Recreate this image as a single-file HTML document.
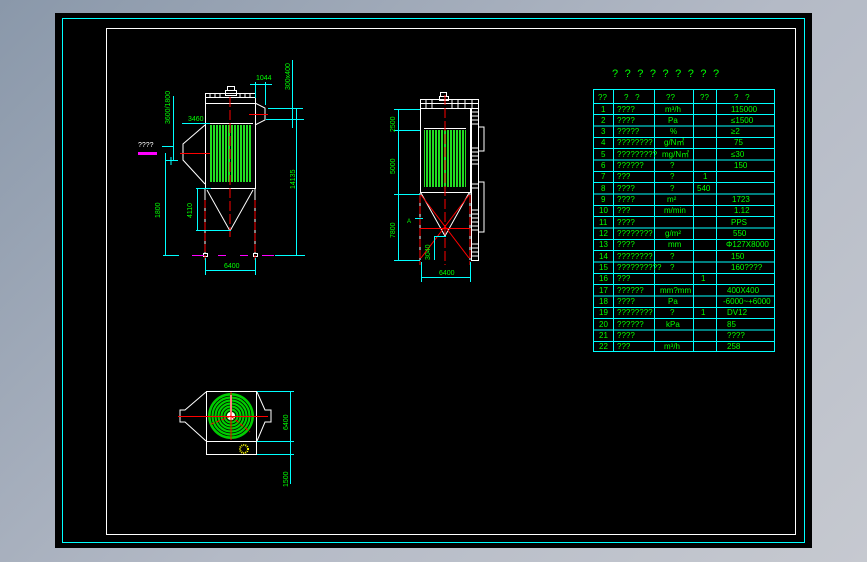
<!DOCTYPE html>
<html><head><meta charset="utf-8"><style>
html,body{margin:0;padding:0;width:867px;height:562px;overflow:hidden;background:linear-gradient(135deg,#8a98aa 0%,#b4bac6 55%,#c6c9d0 100%);}
svg{position:absolute;left:0;top:0}
text{font-family:"Liberation Sans",sans-serif;font-size:8px;fill:#00ff00}
</style></head><body>
<svg width="867" height="562" viewBox="0 0 867 562">
<defs>
<pattern id="bags" width="3" height="10" patternUnits="userSpaceOnUse"><rect width="2" height="10" fill="#22dd22"/></pattern>
</defs>
<rect x="55" y="13" width="757" height="535" fill="#000"/>
<rect x="62.5" y="18.5" width="742" height="524" fill="none" stroke="#00ffff" stroke-width="1"/>
<rect x="106.5" y="28.5" width="689" height="506" fill="none" stroke="#fff" stroke-width="1"/>

<!-- LEFT ELEVATION -->
<g stroke="#fff" stroke-width="1" fill="none">
<rect x="205.5" y="93.5" width="50" height="10"/>
<line x1="205" y1="97.5" x2="255" y2="97.5"/>
<path d="M210 93v5M215 93v5M220 93v5M240 93v5M245 93v5M250 93v5"/>
<rect x="227.5" y="86.5" width="7" height="4"/>
<rect x="225.5" y="90.5" width="11" height="5"/>
<rect x="205.5" y="103.5" width="50" height="85"/>
<line x1="207" y1="123.5" x2="253" y2="123.5"/>
<path d="M205 125 L183 144 L183 160 L205 184"/>
<path d="M255 103 L265 108 L265 120 L255 125"/>
<path d="M205 188 V253 M255 188 V253"/>
<path d="M207 190 L230 231 L253 190"/>
<rect x="203.5" y="253.5" width="4" height="3"/><rect x="253.5" y="253.5" width="4" height="3"/>
</g>
<rect x="209" y="125" width="42" height="57" fill="url(#bags)"/>
<line x1="230" y1="97" x2="230" y2="240" stroke="#f00" stroke-dasharray="10 3"/>
<line x1="205" y1="200" x2="205" y2="260" stroke="#f00" stroke-dasharray="8 3"/>
<line x1="255" y1="200" x2="255" y2="260" stroke="#f00" stroke-dasharray="8 3"/>
<line x1="180" y1="153.5" x2="210" y2="153.5" stroke="#f00"/>
<line x1="249" y1="114.5" x2="268" y2="114.5" stroke="#f00"/>
<line x1="138" y1="153.5" x2="157" y2="153.5" stroke="#ff00ff" stroke-width="3"/>
<text x="138" y="147" style="fill:#fff;font-size:7px">????</text>
<g stroke="#ff00ff"><path d="M192 255.5h12M218 255.5h8M240 255.5h8M262 255.5h12"/></g>
<g stroke="#00ffff" stroke-width="1" fill="none">
<path d="M173.5 96V160M182 123.5h28M162 146.5h12M166 160.5h12M171 157v8"/>
<path d="M165.5 153V255M163 255.5h16M275 255.5h30"/>
<path d="M296.5 108V255M268 108.5h35M266 119.5h38M292.5 60V128"/>
<path d="M255.5 82V98M265.5 82V105M250 84.5h22"/>
<path d="M196 188.5h15M196 230.5h35M197.5 188V230"/>
<path d="M205.5 258V275M255.5 258V275M205 270.5h50"/>
</g>
<text transform="translate(170,112) rotate(-90)" x="-12" y="0" style="font-size:7px">3600/1800</text>
<text x="188" y="121" style="font-size:7px">3460</text>
<text transform="translate(160,210) rotate(-90)" x="-8" y="0" style="font-size:7px">1800</text>
<text transform="translate(192,212) rotate(-90)" x="-6" y="0" style="font-size:7px">4110</text>
<text transform="translate(295,183) rotate(-90)" x="-6" y="0" style="font-size:7px">14135</text>
<text x="256" y="80" style="font-size:7px">1044</text>
<text transform="translate(290,78) rotate(-90)" x="-12" y="0" style="font-size:7px">300x400</text>
<text x="224" y="268" style="font-size:7px">6400</text>

<!-- MIDDLE ELEVATION -->
<g stroke="#fff" stroke-width="1" fill="none">
<rect x="420.5" y="99.5" width="58" height="9"/>
<path d="M420 103.5h58M426 99v9M432 99v9M452 99v9M458 99v9M465 99v9M472 99v9"/>
<rect x="440.5" y="92.5" width="6" height="4"/><rect x="439.5" y="96.5" width="9" height="4"/>
<rect x="420.5" y="108.5" width="50" height="84"/>
<path d="M424 128.5h42"/>
<path d="M420 193V260M470 193V260"/>
<path d="M421 193 L445 236 L469 193"/>
<rect x="471.5" y="108.5" width="7" height="152"/>
<path d="M471 112h7M471 116h7M471 120h7M471 124h7M471 148h7M471 152h7M471 156h7M471 160h7M471 164h7M471 184h7M471 188h7M471 210h7M471 214h7M471 218h7M471 222h7M471 226h7M471 230h7M471 244h7M471 248h7M471 252h7M471 256h7"/>
<path d="M478 127h6v24h-6M478 182h6v50h-6"/>
</g>
<rect x="424" y="130" width="42" height="57" fill="url(#bags)"/>
<line x1="445" y1="95" x2="445" y2="265" stroke="#f00" stroke-dasharray="10 3"/>
<g stroke="#f00" fill="none"><path d="M421 195 L469 258 M469 195 L421 258 M420 228.5h50"/><path d="M420 195V265M470 195V265" stroke-dasharray="8 3"/></g>
<g stroke="#00ffff" fill="none">
<path d="M398.5 109V260M394 109.5h26M394 130.5h26M394 194.5h26M394 260.5h26"/>
<path d="M415 218.5h8M434 236.5h12M434.5 236V260M421.5 262V282M470.5 262V282M421 277.5h49"/>
</g>
<text transform="translate(395,126) rotate(-90)" x="-6" y="0" style="font-size:7px">2500</text>
<text transform="translate(395,168) rotate(-90)" x="-6" y="0" style="font-size:7px">5000</text>
<text transform="translate(395,232) rotate(-90)" x="-6" y="0" style="font-size:7px">7800</text>
<text transform="translate(430,254) rotate(-90)" x="-6" y="0" style="font-size:7px">3040</text>
<text x="407" y="223" style="font-size:6px">A</text>
<text x="439" y="275" style="font-size:7px">6400</text>

<!-- PLAN VIEW -->
<g stroke="#fff" fill="none">
<rect x="206.5" y="391.5" width="50" height="50"/>
<rect x="206.5" y="441.5" width="50" height="13"/>
<path d="M206 392 L185 410 H180 V422 H185 L206 441"/>
<path d="M257 392 L265 410 H271 V422 H265 L257 441"/>
</g>
<circle cx="231" cy="416" r="23" fill="#00cc00"/>
<g fill="none" stroke="#000" stroke-width="0.8">
<circle cx="231" cy="416" r="20"/><circle cx="231" cy="416" r="17"/><circle cx="231" cy="416" r="14"/><circle cx="231" cy="416" r="11"/><circle cx="231" cy="416" r="8"/><circle cx="231" cy="416" r="5"/>
</g>
<circle cx="231" cy="416" r="4" fill="#fff"/>
<g stroke="#fff" stroke-width="2"><path d="M231 416 V395"/></g>
<g stroke="#f00" fill="none"><path d="M178 416.5h90M231 392v48"/><path d="M231 416 L209 425 M231 416 L250 432" stroke-dasharray="4 2"/></g>
<circle cx="244" cy="449" r="4" fill="none" stroke="#ffff00" stroke-dasharray="1 1" stroke-width="2"/>
<g stroke="#00ffff" fill="none"><path d="M257 391.5h37M257 441.5h37M257 454.5h37M290.5 391V484"/></g>
<text transform="translate(288,424) rotate(-90)" x="-6" y="0" style="font-size:7px">6400</text>
<text transform="translate(288,481) rotate(-90)" x="-6" y="0" style="font-size:7px">1500</text>

<!-- TITLE & TABLE -->
<text x="612" y="77" style="font-size:11px;letter-spacing:6.5px">?????????</text>
<g stroke="#00ffff" fill="none" stroke-width="1">
<rect x="593.5" y="89.5" width="181" height="262"/>
<path d="M613.5 89v262M654.5 89v262M693.5 89v262M716.5 89v262"/>
<path d="M593 103.5h181M593 114.5h181M593 126h181M593 137.5h181M593 148.5h181M593 160h181M593 171.5h181M593 182.5h181M593 194h181M593 205.5h181M593 216.5h181M593 228h181M593 239.5h181M593 250.5h181M593 262h181M593 273.5h181M593 284.5h181M593 296h181M593 307.5h181M593 318.5h181M593 330h181M593 341.5h181"/>
</g>
<g style="font-size:7px">
<text x="598" y="100">??</text><text x="624" y="100">?&#160;&#160;&#160;?</text><text x="666" y="100">??</text><text x="700" y="100">??</text><text x="734" y="100">?&#160;&#160;&#160;?</text>
<text x="601" y="112">1</text><text x="617" y="112">????</text><text x="665" y="112">m³/h</text><text x="731" y="112">115000</text>
<text x="601" y="123">2</text><text x="617" y="123">????</text><text x="668" y="123">Pa</text><text x="731" y="123">≤1500</text>
<text x="601" y="134">3</text><text x="617" y="134">?????</text><text x="670" y="134">%</text><text x="731" y="134">≥2</text>
<text x="601" y="145">4</text><text x="617" y="145">????????</text><text x="664" y="145">g/N㎥</text><text x="734" y="145">75</text>
<text x="601" y="157">5</text><text x="617" y="157">?????????</text><text x="662" y="157">mg/N㎥</text><text x="731" y="157">≤30</text>
<text x="601" y="168">6</text><text x="617" y="168">??????</text><text x="670" y="168">?</text><text x="734" y="168">150</text>
<text x="601" y="179">7</text><text x="617" y="179">???</text><text x="670" y="179">?</text><text x="703" y="179">1</text>
<text x="601" y="191">8</text><text x="617" y="191">????</text><text x="670" y="191">?</text><text x="697" y="191">540</text>
<text x="601" y="202">9</text><text x="617" y="202">????</text><text x="667" y="202">m²</text><text x="732" y="202">1723</text>
<text x="599" y="213">10</text><text x="617" y="213">???</text><text x="664" y="213">m/min</text><text x="734" y="213">1.12</text>
<text x="599" y="225">11</text><text x="617" y="225">????</text><text x="731" y="225">PPS</text>
<text x="599" y="236">12</text><text x="617" y="236">????????</text><text x="665" y="236">g/m²</text><text x="733" y="236">550</text>
<text x="599" y="247">13</text><text x="617" y="247">????</text><text x="668" y="247">mm</text><text x="726" y="247">Φ127X8000</text>
<text x="599" y="259">14</text><text x="617" y="259">????????</text><text x="670" y="259">?</text><text x="731" y="259">150</text>
<text x="599" y="270">15</text><text x="617" y="270">??????????</text><text x="670" y="270">?</text><text x="731" y="270">160????</text>
<text x="599" y="281">16</text><text x="617" y="281">???</text><text x="701" y="281">1</text>
<text x="599" y="293">17</text><text x="617" y="293">??????</text><text x="660" y="293">mm?mm</text><text x="727" y="293">400X400</text>
<text x="599" y="304">18</text><text x="617" y="304">????</text><text x="668" y="304">Pa</text><text x="723" y="304">-6000~+6000</text>
<text x="599" y="315">19</text><text x="617" y="315">????????</text><text x="670" y="315">?</text><text x="701" y="315">1</text><text x="727" y="315">DV12</text>
<text x="599" y="327">20</text><text x="617" y="327">??????</text><text x="666" y="327">kPa</text><text x="727" y="327">85</text>
<text x="599" y="338">21</text><text x="617" y="338">????</text><text x="727" y="338">????</text>
<text x="599" y="349">22</text><text x="617" y="349">???</text><text x="664" y="349">m³/h</text><text x="727" y="349">258</text>
</g>
</svg>
</body></html>
